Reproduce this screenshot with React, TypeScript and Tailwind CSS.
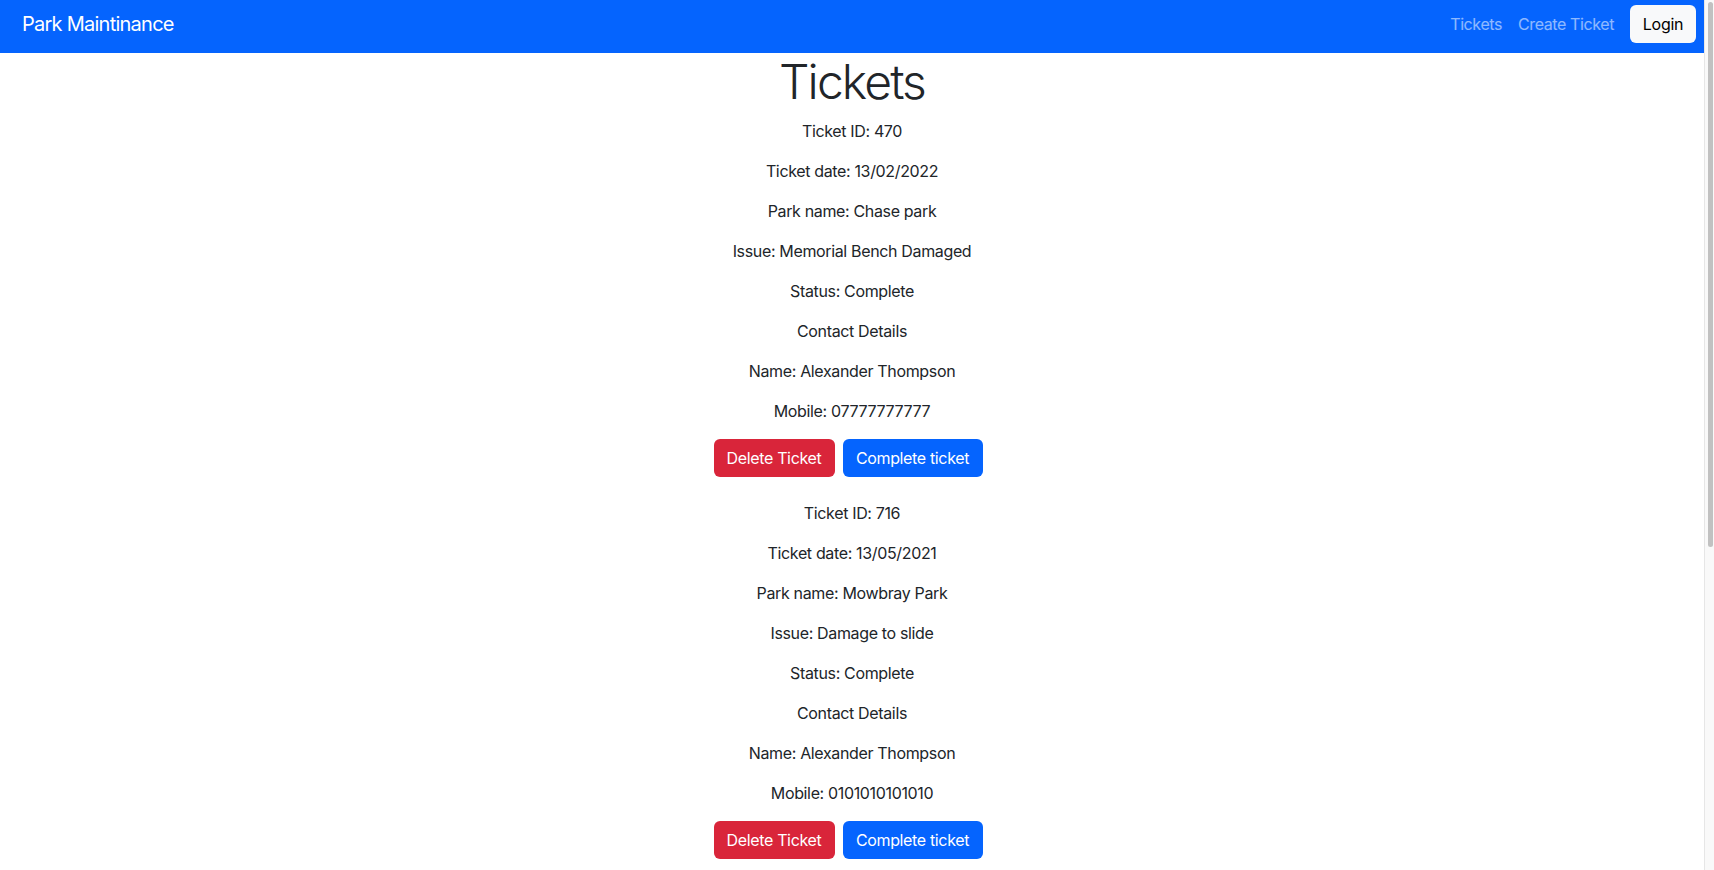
import React from 'react';

interface Ticket {
  id: number;
  date: string;
  park: string;
  issue: string;
  status: string;
  name: string;
  mobile: string;
}

const tickets: Ticket[] = [
  { id: 470, date: '13/02/2022', park: 'Chase park', issue: 'Memorial Bench Damaged', status: 'Complete', name: 'Alexander Thompson', mobile: '07777777777' },
  { id: 716, date: '13/05/2021', park: 'Mowbray Park', issue: 'Damage to slide', status: 'Complete', name: 'Alexander Thompson', mobile: '0101010101010' },
  { id: 823, date: '02/03/2022', park: 'Barnes Park', issue: 'Broken gate', status: 'Open', name: 'Alexander Thompson', mobile: '07777777777' },
];

const Navbar = () => (
  <nav className="bg-[#0564fe] pt-[5px] pb-[10px] pl-[22px] pr-[8px]">
    <div className="flex items-center justify-between h-[38px]">
      <a href="#" className="text-white text-[20px] leading-[30px] tracking-[-0.75px]">Park Maintinance</a>
      <div className="flex items-center">
        <a href="#" className="px-2 text-[16px] text-white/55 tracking-[-0.4px]">Tickets</a>
        <a href="#" className="px-2 text-[16px] text-white/55 tracking-[-0.4px]">Create Ticket</a>
        <button className="ml-2 h-[38px] w-[66px] rounded-md bg-[#f8f9fa] text-black text-[16px] tracking-[-0.3px]">Login</button>
      </div>
    </div>
  </nav>
);

const TicketCard = ({ t }: { t: Ticket }) => (
  <div className="mb-6">
    <p className="mb-4">Ticket ID: {t.id}</p>
    <p className="mb-4">Ticket date: {t.date}</p>
    <p className="mb-4">Park name: {t.park}</p>
    <p className="mb-4">Issue: {t.issue}</p>
    <p className="mb-4">Status: {t.status}</p>
    <p className="mb-4">Contact Details</p>
    <p className="mb-4">Name: {t.name}</p>
    <p className="mb-4">Mobile: {t.mobile}</p>
    <div className="flex justify-center gap-2">
      <button className="h-[38px] w-[121px] rounded-md bg-[#d9253a] text-white">Delete Ticket</button>
      <button className="mr-2 h-[38px] w-[140px] rounded-md bg-[#0564fe] text-white">Complete ticket</button>
    </div>
  </div>
);

// page scrollbar as drawn in the screenshot
const Scrollbar = () => (
  <div className="w-[10px] shrink-0 h-screen bg-[#f9f9f9] border-l border-[#e6e6e6] pl-[3px] pr-[1px] pt-[2px]">
    <div className="h-[545px] w-full rounded-full bg-[#c1c1c1]" />
  </div>
);

export default function App() {
  return (
    <div className="flex h-screen bg-white text-[#212529] text-[16px] leading-6 tracking-[-0.35px] font-['Inter','Liberation_Sans',sans-serif]">
      <div className="flex-1 min-w-0 overflow-y-auto">
        <Navbar />
        <main className="text-center pb-[120px]">
          <h1 className="text-[48px] leading-[1.2] font-light tracking-[-1.9px] mb-2">Tickets</h1>
          {tickets.map((t) => (
            <TicketCard key={t.id} t={t} />
          ))}
        </main>
      </div>
      <Scrollbar />
    </div>
  );
}
